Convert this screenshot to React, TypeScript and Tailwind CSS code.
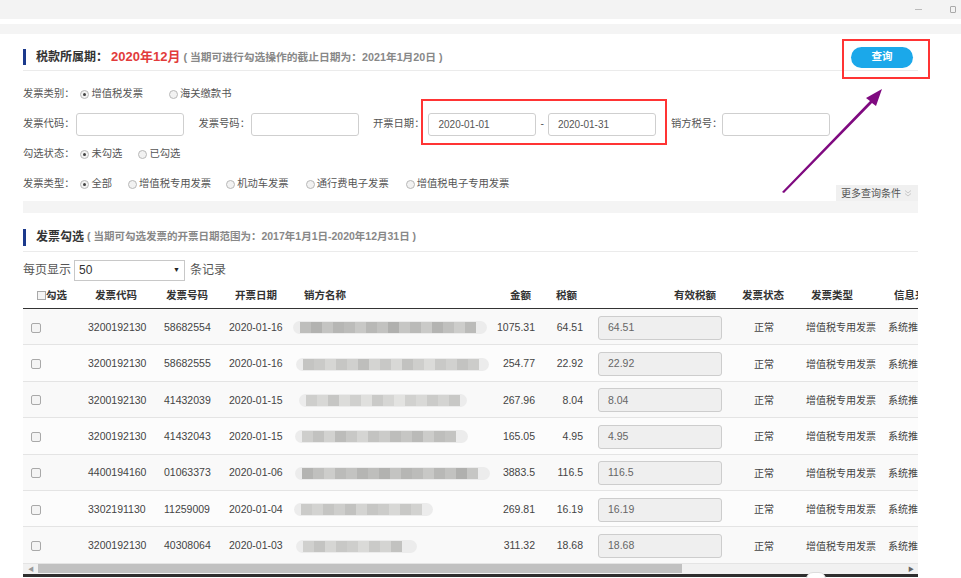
import React from "react";

const rows = [
  { code: "3200192130", no: "58682554", date: "2020-01-16", amt: "1075.31", tax: "64.51", nx: 0, nw: 194, tone: 0 },
  { code: "3200192130", no: "58682555", date: "2020-01-16", amt: "254.77", tax: "22.92", nx: 3, nw: 193, tone: 14 },
  { code: "3200192130", no: "41432039", date: "2020-01-15", amt: "267.96", tax: "8.04", nx: 6, nw: 168, tone: 22 },
  { code: "3200192130", no: "41432043", date: "2020-01-15", amt: "165.05", tax: "4.95", nx: 2, nw: 173, tone: 8 },
  { code: "4400194160", no: "01063373", date: "2020-01-06", amt: "3883.5", tax: "116.5", nx: 2, nw: 195, tone: 0 },
  { code: "3302191130", no: "11259009", date: "2020-01-04", amt: "269.81", tax: "16.19", nx: 1, nw: 139, tone: 16 },
  { code: "3200192130", no: "40308064", date: "2020-01-03", amt: "311.32", tax: "18.68", nx: 3, nw: 121, tone: 18 },
];

const base = [190, 178, 196, 182, 188, 200, 184, 194, 176, 198, 186, 202, 180, 192, 205, 187, 195, 181];

function Blur({ x, w, tone, seed }: { x: number; w: number; tone: number; seed: number }) {
  const n = Math.floor((w - 14) / 11);
  return (
    <div
      className="flex h-[13px] items-center rounded-full bg-[#ececec] px-[7px] blur-[0.6px]"
      style={{ marginLeft: x, width: w }}
    >
      {Array.from({ length: n }).map((_, i) => {
        const v = Math.min(230, base[(i + seed * 3) % base.length] + tone);
        return <span key={i} className="h-[11px] w-[11px]" style={{ backgroundColor: `rgb(${v},${v},${v - 2})` }} />;
      })}
    </div>
  );
}

function Radio({ on, label, className = "" }: { on?: boolean; label: string; className?: string }) {
  return (
    <span className={"flex items-center " + className}>
      <span className="mr-[2px] flex h-[9px] w-[9px] items-center justify-center rounded-full border border-[#b8b8b8] bg-[#f2f2f2]">
        {on && <span className="h-[3px] w-[3px] rounded-full bg-[#444]" />}
      </span>
      <span>{label}</span>
    </span>
  );
}

function Box({ value = "" }: { value?: string }) {
  return (
    <div className="flex h-[23px] w-[108px] items-center rounded-[3px] border border-[#cfcfcf] bg-white pl-[9px] text-[10px] text-[#555]">
      {value}
    </div>
  );
}

function Check() {
  return <span className="inline-block h-[10px] w-[10px] rounded-[2px] border border-[#a9a9a9] bg-[#f4f4f4]" />;
}

export default function App() {
  return (
    <div className="relative h-[578px] w-[961px] overflow-hidden bg-white font-['Liberation_Sans','Noto_Sans_CJK_SC',sans-serif] text-[10px] text-[#555]">
      {/* window chrome */}
      <div className="flex h-[19px] items-center justify-end bg-[#f3f3f3] pr-[5px]">
        <span className="mr-[28px] h-[1px] w-[7px] bg-[#bbb]" />
        <span className="h-[7px] w-[6px] rounded-[1px] border border-[#aaa]" />
      </div>
      <div className="mt-[5px] h-[10px] bg-[#f4f4f4]" />

      <div className="ml-[23px] w-[895px]">
        {/* 税款所属期 */}
        <div className="flex h-[37px] items-center justify-between border-b border-[#ebebeb] pt-[10px]">
          <div className="flex items-center">
            <span className="h-[16px] w-[3px] bg-[#1c3a8c]" />
            <span className="ml-[10px] text-[12px] font-bold text-[#333]">税款所属期：</span>
            <span className="ml-[3px] text-[13px] font-bold text-[#e23b3b]">2020年12月</span>
            <span className="ml-[3px] text-[10.75px] font-bold text-[#888]">( 当期可进行勾选操作的截止日期为：2021年1月20日 )</span>
          </div>
          <div className="mr-[5px] flex h-[21px] w-[62px] items-center justify-center rounded-full bg-[#1ba8ea] text-[10.5px] font-bold text-white">
            查询
          </div>
        </div>

        {/* form */}
        <div className="pt-[8px] text-[10.3px]">
          <div className="flex h-[30px] items-center">
            <span>发票类别：</span>
            <Radio on label="增值税发票" className="ml-[6px]" />
            <Radio label="海关缴款书" className="ml-[26px]" />
          </div>
          <div className="flex h-[30px] items-center">
            <span>发票代码：</span>
            <span className="ml-[2px]"><Box /></span>
            <span className="ml-[14px]">发票号码：</span>
            <span className="ml-[1px]"><Box /></span>
            <span className="ml-[14px]">开票日期：</span>
            <span className="ml-[4px]"><Box value="2020-01-01" /></span>
            <span className="mx-[4px]">-</span>
            <Box value="2020-01-31" />
            <span className="ml-[15px]">销方税号：</span>
            <span className="ml-[0px]"><Box /></span>
          </div>
          <div className="flex h-[30px] items-center">
            <span>勾选状态：</span>
            <Radio on label="未勾选" className="ml-[6px]" />
            <Radio label="已勾选" className="ml-[16px]" />
          </div>
          <div className="flex h-[32px] items-start justify-between">
            <div className="flex h-[30px] items-center">
              <span>发票类型：</span>
              <Radio on label="全部" className="ml-[6px]" />
              <Radio label="增值税专用发票" className="ml-[16px]" />
              <Radio label="机动车发票" className="ml-[15px]" />
              <Radio label="通行费电子发票" className="ml-[17px]" />
              <Radio label="增值税电子专用发票" className="ml-[17px]" />
            </div>
            <div className="flex h-[16px] w-[82px] items-center gap-[3px] self-end whitespace-nowrap bg-[#f0f0f0] pl-[5px] text-[10px] text-[#555]">
              更多查询条件
              <svg width="8" height="8" viewBox="0 0 8 8" fill="none" stroke="#c4c4c4" strokeWidth="0.9">
                <path d="M1 1.5 L4 4 L7 1.5 M1 4.5 L4 7 L7 4.5" />
              </svg>
            </div>
          </div>
          <div className="h-[12px] bg-[#f4f4f4]" />
        </div>

        {/* 发票勾选 */}
        <div className="flex items-center border-b border-[#ebebeb] pb-[5px] pt-[15px]">
          <span className="h-[17px] w-[3px] bg-[#1c3a8c]" />
          <span className="ml-[10px] text-[12px] font-bold text-[#333]">发票勾选</span>
          <span className="ml-[3px] text-[10.5px] font-bold text-[#888]">( 当期可勾选发票的开票日期范围为：2017年1月1日-2020年12月31日 )</span>
        </div>

        <div className="mt-[7px] flex h-[22px] items-center text-[12px] text-[#555]">
          <span>每页显示</span>
          <div className="ml-[3px] flex h-[21px] w-[111px] items-center justify-between border border-[#c8c8c8] bg-white pl-[4px] pr-[4px] text-[12px] text-[#333]">
            <span>50</span>
            <span className="text-[7px] text-[#222]">▼</span>
          </div>
          <span className="ml-[5px]">条记录</span>
        </div>

        {/* table */}
        <div className="grid h-[28px] grid-cols-[65px_76px_65px_64px_200px_54px_50px_140px_60px_80px_41px] items-center overflow-hidden border-b border-[#333] pt-[2px] text-[10.5px] font-bold text-[#333]">
          <div className="flex items-center pl-[14px]">
            <span className="inline-block h-[9px] w-[9px] border border-[#a9a9a9] bg-[#f4f4f4]" />
            <span>勾选</span>
          </div>
          <div className="pl-[7px]">发票代码</div>
          <div className="pl-[2px]">发票号码</div>
          <div className="pl-[6px]">开票日期</div>
          <div className="pl-[11px]">销方名称</div>
          <div className="pl-[17px]">金额</div>
          <div className="pl-[9px]">税额</div>
          <div className="pr-[21px] text-right">有效税额</div>
          <div className="pl-[5px]">发票状态</div>
          <div className="pl-[14px]">发票类型</div>
          <div className="overflow-hidden whitespace-nowrap pl-[17px]">信息来源</div>
        </div>

        {rows.map((r, i) => (
          <div
            key={i}
            className={
              "grid h-[36.4px] grid-cols-[65px_76px_65px_64px_200px_54px_50px_140px_60px_80px_41px] items-center overflow-hidden border-b border-[#e4e4e4] pt-[2px] text-[10.5px] text-[#444] " +
              (i % 2 === 0 ? "bg-[#f9f9f9]" : "bg-[#fcfcfc]")
            }
          >
            <div className="flex items-center pl-[8px]">
              <Check />
            </div>
            <div>{r.code}</div>
            <div>{r.no}</div>
            <div>{r.date}</div>
            <div>
              <Blur x={r.nx} w={r.nw} tone={r.tone} seed={i} />
            </div>
            <div className="pr-[12px] text-right">{r.amt}</div>
            <div className="pr-[14px] text-right">{r.tax}</div>
            <div className="pl-[1px]">
              <div className="flex h-[24px] w-[124px] items-center rounded-[3px] border border-[#cdcdcd] bg-[#efefef] pl-[9px] text-[#666]">
                {r.tax}
              </div>
            </div>
            <div className="pl-[17px] text-[10px]">正常</div>
            <div className="pl-[9px] text-[10px]">增值税专用发票</div>
            <div className="overflow-hidden whitespace-nowrap pl-[11px] text-[10px]">系统推送</div>
          </div>
        ))}

        {/* horizontal scrollbar */}
        <div className="flex h-[10px] items-center bg-[#f1f1f1]">
          <span className="ml-[5px] text-[6px] leading-none text-[#999]">◀</span>
          <div className="ml-[4px] h-[9px] w-[644px] bg-[#c1c1c1]" />
          <span className="ml-auto mr-[4px] text-[6px] leading-none text-[#666]">▶</span>
        </div>
        <div className="h-[3px] bg-[#2e2e2e]" />
      </div>

      {/* annotations */}
      <div className="absolute left-[842px] top-[39px] h-[40px] w-[88px] border-2 border-[#ff3434]" />
      <div className="absolute left-[421px] top-[99px] h-[46px] w-[246px] border-2 border-[#ff3434]" />
      <div className="absolute left-[806px] top-[572px] h-[14px] w-[20px] rounded-full border border-[#ddd] bg-white" />
      <svg className="absolute left-0 top-0" width="961" height="578" viewBox="0 0 961 578">
        <polygon points="782,192 870,101 866,98 882,89 876,106 872,103 784,193" fill="#7f0a80" />
      </svg>
    </div>
  );
}
